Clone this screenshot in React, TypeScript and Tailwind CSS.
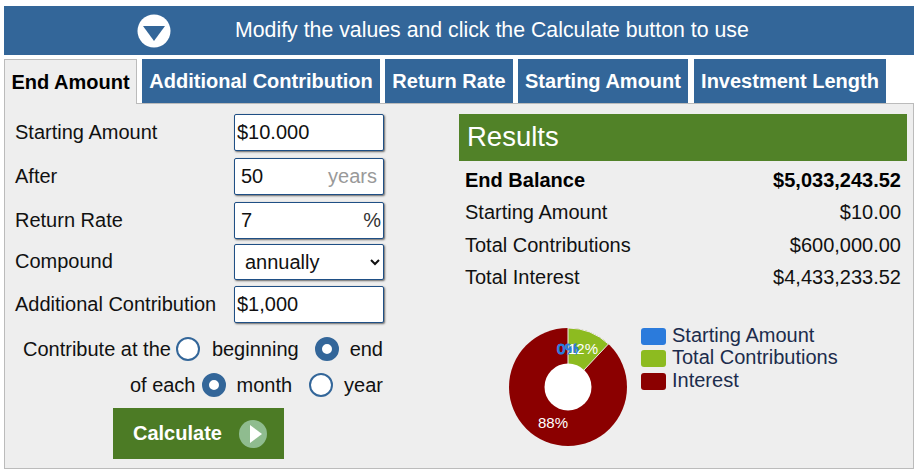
const font = { fontFamily: '"Liberation Sans", Arial, sans-serif' };

function Tab({ label, className }: { label: string; className: string }) {
  return (
    <div className={`h-[44px] flex items-center justify-center bg-[#336699] text-white font-bold ${className}`}>
      {label}
    </div>
  );
}

function Field({ label, value, suffix, pad, h, mb }: { label: string; value: string; suffix?: string; pad: string; h: string; mb: string }) {
  return (
    <div className={`flex items-center ${mb}`}>
      <label className="w-[219px] shrink-0 -mt-[2px]">{label}</label>
      <div className={`relative w-[150px] ${h}`}>
        <input
          readOnly
          value={value}
          className={`w-full h-full bg-white border border-[#1f4f85] rounded-[2px] shadow-[1px_1px_2px_#666] outline-none ${pad}`}
        />
        {suffix && (
          <span className={`absolute top-[6px] ${suffix === "%" ? "right-[3px] text-[#333]" : "right-[7px] text-[#999]"}`}>{suffix}</span>
        )}
      </div>
    </div>
  );
}

function Radio({ checked, className }: { checked?: boolean; className: string }) {
  return checked ? (
    <span className={`w-[24px] h-[24px] shrink-0 rounded-full bg-white border-[7px] border-[#336699] ${className}`} />
  ) : (
    <span className={`w-[24px] h-[24px] shrink-0 rounded-full bg-white border-2 border-[#336699] ${className}`} />
  );
}

function Row({ label, value, bold }: { label: string; value: string; bold?: boolean }) {
  return (
    <div className={`flex justify-between h-[32.5px] items-center px-[6px] ${bold ? "font-bold text-black" : ""}`}>
      <span>{label}</span>
      <span>{value}</span>
    </div>
  );
}

function Pie() {
  return (
    <svg width="120" height="120" viewBox="0 0 120 120" className="shrink-0" style={font}>
      <circle cx="60" cy="60" r="59" fill="#8b0000" />
      <path d="M60 60 L60 1 A59 59 0 0 1 100.4 17 Z" fill="#8dbb20" stroke="#eeeeee" strokeWidth="1" />
      <circle cx="60" cy="60" r="23.5" fill="#ffffff" />
      <text x="49" y="27" fontSize="15" fill="#ffffff" stroke="#2b7bdc" strokeWidth="1.2">0%</text>
      <text x="60" y="27" fontSize="15" fill="#ffffff">12%</text>
      <text x="30" y="101" fontSize="15" fill="#ffffff">88%</text>
    </svg>
  );
}

function Legend({ color, label }: { color: string; label: string }) {
  return (
    <div className="flex items-center h-[22.5px] text-[#1c2c4c]">
      <span className={`w-[25px] h-[17px] rounded-[3px] mr-[6px] ${color}`} />
      <span className="-mt-[3px]">{label}</span>
    </div>
  );
}

export default function App() {
  return (
    <div className="w-[920px] h-[472px] bg-white pt-[6px] px-[4px] text-[20px] leading-[24px] text-[#111] overflow-hidden" style={font}>
      <div className="w-[910px] h-[49px] bg-[#336699] text-white text-[21.3px] flex items-center pl-[133px] gap-[64px]">
        <svg width="34" height="34" viewBox="0 0 34 34">
          <circle cx="17" cy="17" r="16.5" fill="#ffffff" />
          <path d="M6 12 H28 L17 27 Z" fill="#336699" />
        </svg>
        <span className="-mt-[1px]">Modify the values and click the Calculate button to use</span>
      </div>

      <div className="flex mt-[4px] h-[44px] relative z-10">
        <div className="w-[133px] h-[45px] bg-[#eeeeee] border border-b-0 border-[#bbbbbb] font-bold text-black flex items-center justify-center">
          End Amount
        </div>
        <Tab label="Additional Contribution" className="w-[238px] ml-[5px]" />
        <Tab label="Return Rate" className="w-[128px] ml-[5px]" />
        <Tab label="Starting Amount" className="w-[170px] ml-[5px]" />
        <Tab label="Investment Length" className="w-[192px] ml-[6px]" />
      </div>

      <div className="w-[910px] h-[366px] bg-[#eeeeee] border border-[#bbbbbb] flex">
        <div className="w-[454px] shrink-0 pl-[10px] pt-[10px]">
          <Field label="Starting Amount" value="$10.000" pad="pl-[2px]" h="h-[37px]" mb="mb-[7px]" />
          <Field label="After" value="50" suffix="years" pad="pl-[6px]" h="h-[37px]" mb="mb-[7px]" />
          <Field label="Return Rate" value="7" suffix="%" pad="pl-[6px]" h="h-[37px]" mb="mb-[5px]" />
          <div className="flex items-center mb-[6px]">
            <label className="w-[219px] shrink-0 -mt-[2px]">Compound</label>
            <select className="w-[150px] h-[36px] bg-white border border-[#1f4f85] rounded-[2px] shadow-[1px_1px_2px_#666] outline-none pl-[6px]" defaultValue="annually">
              <option value="annually">annually</option>
            </select>
          </div>
          <Field label="Additional Contribution" value="$1,000" pad="pl-[2px]" h="h-[37px]" mb="mb-0" />

          <div className="w-[368px] flex justify-end items-center h-[24px] mt-[14px]">
            <span>Contribute at the</span>
            <Radio className="ml-[5px]" />
            <span className="ml-[12px]">beginning</span>
            <Radio checked className="ml-[16px]" />
            <span className="ml-[11px]">end</span>
          </div>
          <div className="w-[368px] flex justify-end items-center h-[24px] mt-[12px]">
            <span>of each</span>
            <Radio checked className="ml-[6px]" />
            <span className="ml-[11px]">month</span>
            <Radio className="ml-[17px]" />
            <span className="ml-[11px]">year</span>
          </div>
          <div className="w-[171px] h-[51px] ml-[98px] mt-[11px] bg-[#4c7b25] text-white font-bold flex items-center pl-[20px]">
            <span className="-mt-[1px]">Calculate</span>
            <svg width="28" height="28" viewBox="0 0 28 28" className="ml-[17px]">
              <circle cx="14" cy="14" r="14" fill="#8fbc8f" />
              <path d="M11 5 L23 14 L11 23 Z" fill="#ffffff" />
            </svg>
          </div>
        </div>

        <div className="w-[448px] shrink-0 pt-[10px]">
          <div className="h-[47px] bg-[#518228] text-white text-[27.5px] flex items-center pl-[8px]">
            <span className="-mt-[2px]">Results</span>
          </div>
          <div className="mt-[2.6px]">
            <Row label="End Balance" value="$5,033,243.52" bold />
            <Row label="Starting Amount" value="$10.00" />
            <Row label="Total Contributions" value="$600,000.00" />
            <Row label="Total Interest" value="$4,433,233.52" />
          </div>
          <div className="flex mt-[33px] pl-[49px]">
            <Pie />
            <div className="ml-[13px] -mt-[1.5px]">
              <Legend color="bg-[#2b7bdc]" label="Starting Amount" />
              <Legend color="bg-[#8dbb20]" label="Total Contributions" />
              <Legend color="bg-[#8b0000]" label="Interest" />
            </div>
          </div>
        </div>
      </div>
    </div>
  );
}
